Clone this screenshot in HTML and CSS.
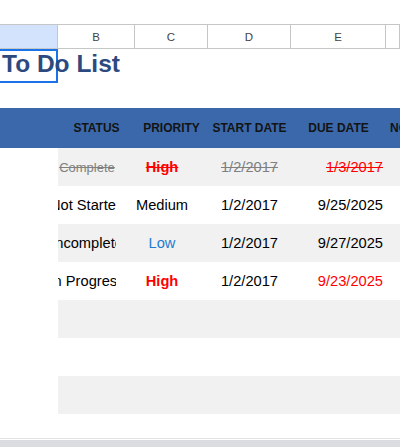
FILE: index.html
```html
<!DOCTYPE html>
<html>
<head>
    <meta charset="utf-8">
    <title>To Do List</title>
    <link rel="stylesheet" href="styles.css">
</head>
<body>
    <div class="sheet">
        <div class="top-gap"></div>

        <!-- column letters -->
        <div class="col-heads">
            <div class="col-head active"></div>
            <div class="col-head">B</div>
            <div class="col-head">C</div>
            <div class="col-head">D</div>
            <div class="col-head">E</div>
            <div class="col-head"></div>
        </div>

        <div class="title-row">
            <div class="title-cell">
                <span class="title">To Do List</span>
            </div>
        </div>

        <div class="todo">
            <div class="todo-row todo-head">
                <div class="cell blank"></div>
                <div class="cell status">STATUS</div>
                <div class="cell priority">PRIORITY</div>
                <div class="cell start">START DATE</div>
                <div class="cell due">DUE DATE</div>
                <div class="cell notes">NOTES</div>
            </div>

            <div class="todo-row shaded done">
                <div class="cell blank"></div>
                <div class="cell status"><span>Complete</span></div>
                <div class="cell priority"><span class="high">High</span></div>
                <div class="cell start"><span>1/2/2017</span></div>
                <div class="cell due"><span class="late">1/3/2017</span></div>
                <div class="cell notes"></div>
            </div>
            <div class="todo-row">
                <div class="cell blank"></div>
                <div class="cell status"><span>Not Started</span></div>
                <div class="cell priority"><span>Medium</span></div>
                <div class="cell start"><span>1/2/2017</span></div>
                <div class="cell due"><span>9/25/2025</span></div>
                <div class="cell notes"></div>
            </div>
            <div class="todo-row shaded">
                <div class="cell blank"></div>
                <div class="cell status"><span>Incomplete</span></div>
                <div class="cell priority"><span class="low">Low</span></div>
                <div class="cell start"><span>1/2/2017</span></div>
                <div class="cell due"><span>9/27/2025</span></div>
                <div class="cell notes"></div>
            </div>
            <div class="todo-row">
                <div class="cell blank"></div>
                <div class="cell status"><span>In Progress</span></div>
                <div class="cell priority"><span class="high">High</span></div>
                <div class="cell start"><span>1/2/2017</span></div>
                <div class="cell due"><span class="late">9/23/2025</span></div>
                <div class="cell notes"></div>
            </div>
            <div class="todo-row shaded"><div class="cell blank"></div></div>
            <div class="todo-row"><div class="cell blank"></div></div>
            <div class="todo-row shaded"><div class="cell blank"></div></div>
        </div>

        <div class="bottom-bar"></div>
    </div>
</body>
</html>
```

FILE: styles.css
```css
body {
    margin: 0;
    background-color: #fff;
    font-family: "Liberation Sans", Arial, sans-serif;
}

.sheet {
    height: 447px;
    display: flex;
    flex-direction: column;
    overflow: hidden;
}

.top-gap {
    height: 24px;
}

/* Column letters */
.col-heads,
.todo-row {
    display: grid;
    grid-template-columns: 58px 77px 73px 83px 95px 1fr;
}

.col-heads {
    height: 23px;
    border-top: 1px solid #c4c7c5;
    border-bottom: 1px solid #c4c7c5;
}

.col-head {
    border-right: 1px solid #c4c7c5;
    font-size: 11.5px;
    color: #444;
    display: flex;
    align-items: center;
    justify-content: center;
}

.col-head.active {
    background-color: #d3e3fd;
}

/* Title */
.title-row {
    height: 34px;
    margin-bottom: 25px;
}

.title-cell {
    width: 56px;
    height: 30px;
    margin-left: -2px;
    border: 2px solid #1a73e8;
    white-space: nowrap;
    line-height: 26px;
}

.title {
    padding-left: 2px;
    font-size: 24.5px;
    font-weight: bold;
    color: #2d4a80;
}

/* To do table */
.todo-row {
    height: 38px;
    font-size: 14.667px;
    color: #000;
}

.todo-row.shaded {
    background-color: #f1f1f1;
}

.todo-row .cell {
    display: flex;
    align-items: center;
    overflow: hidden;
    white-space: nowrap;
}

.todo-row .blank {
    background-color: #fff;
}

.todo-row .status,
.todo-row .priority {
    justify-content: center;
    margin-right: 19px;
}

.todo-row .start {
    justify-content: center;
}

.todo-row .due {
    justify-content: flex-end;
    padding-right: 3px;
}

.todo-row .notes {
    padding-left: 4px;
}

.todo-head {
    height: 40px;
    background-color: #3a68aa;
    font-size: 12px;
    font-weight: bold;
    color: #141414;
}

.todo-head .blank {
    background-color: #3a68aa;
}

.todo-head .status,
.todo-head .priority,
.todo-head .due {
    justify-content: center;
    margin-right: 0;
    padding-right: 0;
}

.high {
    color: #ff0000;
    font-weight: bold;
}

.low {
    color: #1f7bd0;
}

.late {
    color: #ff0000;
}

.done .cell span {
    text-decoration: line-through;
}

.done .status span {
    font-size: 13px;
}

.done .status span,
.done .start span {
    color: #808080;
}

.bottom-bar {
    margin-top: auto;
    height: 7px;
    border-top: 1px solid #e1e1e1;
    padding-top: 1px;
    background-color: #dadce0;
    background-clip: content-box;
}
```
